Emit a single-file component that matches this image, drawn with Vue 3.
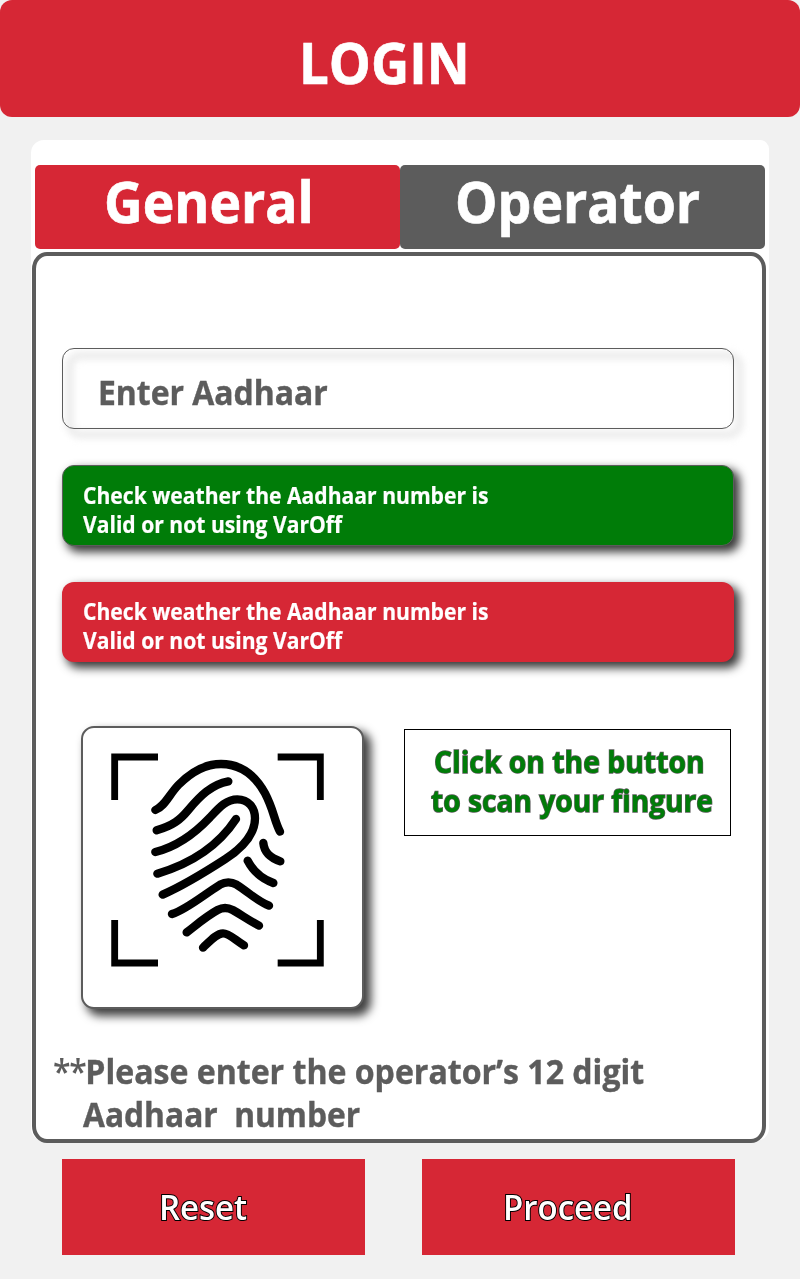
<script setup>
import { ref } from 'vue'

const tab = ref('general')
const aadhaar = ref('')

const notices = [
  { kind: 'valid', lines: ['Check weather the Aadhaar number is', 'Valid or not using VarOff'] },
  { kind: 'invalid', lines: ['Check weather the Aadhaar number is', 'Valid or not using VarOff'] },
]
</script>

<template>
  <div class="page">
    <header class="header"><h1 class="title">LOGIN</h1></header>

    <main class="card">
      <nav class="tabs">
        <button class="tab tab-general" :class="{ active: tab === 'general' }"><span>General</span></button>
        <button class="tab tab-operator" :class="{ active: tab === 'operator' }"><span>Operator</span></button>
      </nav>

      <section class="panel">
        <label class="field"><span>{{ aadhaar || 'Enter Aadhaar' }}</span></label>

        <div v-for="n in notices" :key="n.kind" class="notice" :class="n.kind">
          <span class="n1">{{ n.lines[0] }}</span>
          <span class="n2">{{ n.lines[1] }}</span>
        </div>

        <div class="scan">
          <button class="finger" aria-label="Scan">
            <svg viewBox="39 54 837 837" fill="none" stroke="#000">
              <g stroke-width="20.5">
                <path d="M134 270V141H264" />
                <path d="M623 141H751V270" />
                <path d="M134 630V759H264" />
                <path d="M623 759H751V630" />
              </g>
              <g stroke-width="25" stroke-linecap="round" stroke-linejoin="round">
                <path d="M256 300C285 288 295 257 325 225C365 184 405 162 453 162C510 162 555 195 585 250C612 302 612 330 630 365" />
                <path d="M260 361C310 346 330 330 355 300C390 258 425 223 475 214" />
                <path d="M256 426C320 410 370 375 420 322C450 290 470 268 502 268C535 268 555 293 555 325C555 370 520 412 465 448C400 490 340 527 278 554" />
                <path d="M262 491C350 465 440 415 498 327" />
                <path d="M580 399C583 430 603 444 631 454" />
                <path d="M533 452C550 485 580 508 610 519" />
                <path d="M306 612C350 598 400 555 450 524Q475 510 500 524C535 546 560 572 597 587" />
                <path d="M350 667C385 640 410 618 443 600Q465 588 488 600C515 615 535 630 567 647" />
                <path d="M399 713C420 693 440 670 459 670C478 670 495 690 522 706" />
              </g>
            </svg>
          </button>
          <p class="hint">
            <span class="h1">Click on the button</span>
            <span class="h2">to scan your fingure</span>
          </p>
        </div>

        <p class="note">
          <span class="p1"><b class="stars">**</b>Please enter the operator’s 12 digit</span>
          <span class="p2">Aadhaar&nbsp; number</span>
        </p>
      </section>
    </main>

    <footer class="actions">
      <button class="action reset"><span>Reset</span></button>
      <button class="action proceed"><span>Proceed</span></button>
    </footer>
  </div>
</template>

<style>
body {
  margin: 0;
  background: #f1f1f1;
}
</style>

<style scoped>
.page {
  box-sizing: border-box;
  width: 800px;
  height: 1279px;
  overflow: hidden;
  background: #f1f1f1;
  font-family: "Open Sans", "Noto Sans", sans-serif;
  font-weight: 700;
}
.page * {
  box-sizing: border-box;
}
button {
  border: 0;
  padding: 0;
  margin: 0;
  font: inherit;
  text-align: left;
  display: block;
}
span {
  display: block;
  width: max-content;
  white-space: pre;
  transform: scaleX(0.938);
  transform-origin: 0 50%;
}
.header {
  height: 117px;
  border-radius: 12px;
  background: #d62735;
  padding: 22px 0 0 299px;
}
.title {
  margin: 0;
  width: max-content;
  color: #fff;
  font-size: 57px;
  line-height: 80px;
  -webkit-text-stroke: 0.7px #fff;
  transform: scaleX(0.927);
  transform-origin: 0 50%;
}
.card {
  margin: 23px 31px 0;
  height: 1001px;
  border-radius: 13px 9px 13px 13px;
  background: #fff;
  padding: 25px 3px 0 1px;
}
.tabs {
  display: flex;
  padding-left: 3px;
}
.tab {
  width: 365px;
  height: 84px;
  border-radius: 5px;
  background: #5c5c5c;
  color: #fff;
  font-size: 57px;
  line-height: 80px;
  -webkit-text-stroke: 0.7px #fff;
}
.tab span {
  margin-top: -12px;
}
.tab.active {
  background: #d62735;
}
.tab-general { padding-left: 69px; }
.tab-operator { padding-left: 55px; }
.panel {
  position: relative;
  isolation: isolate;
  margin-top: 3px;
  height: 891px;
  border: 4px solid #5c5c5c;
  border-radius: 15px / 17px;
  background: #fff;
  padding: 92px 0 0 26px;
}
.field {
  position: relative;
  display: block;
  width: 672px;
  height: 81px;
  border: 1px solid #5c5c5c;
  border-radius: 12px;
  padding: 17px 0 0 35px;
  color: #5c5c5c;
  font-size: 34px;
  line-height: 52px;
  -webkit-text-stroke: 0.4px #5c5c5c;
}
.field::before {
  content: "";
  position: absolute;
  z-index: -1;
  inset: 2px -11px -11px 2px;
  border: 9px solid #eeeeee;
  border-radius: 16px;
  filter: blur(3px);
}
.notice {
  width: 672px;
  height: 81px;
  margin-top: 36px;
  border-radius: 12px;
  padding: 15px 0 0 21px;
  color: #fff;
  font-size: 22.5px;
  line-height: 29px;
  -webkit-text-stroke: 0.2px #fff;
  box-shadow: 5px 5px 10px 1px rgba(0, 0, 0, 0.78);
}
.valid {
  background: #007c08;
  border: 1px solid #5c5c5c;
  padding: 15px 0 0 20px;
}
.invalid {
  background: #d62735;
  height: 80px;
}
.scan {
  display: flex;
  align-items: flex-start;
  margin: 64px 0 0 19px;
}
.finger {
  width: 283px;
  height: 283px;
  border: 2px solid #5c5c5c;
  border-radius: 13px;
  background: #fff;
  box-shadow: 6px 6px 10px 1px rgba(0, 0, 0, 0.75);
}
.finger svg {
  display: block;
  width: 279px;
  height: 279px;
}
.hint {
  width: 327px;
  height: 107px;
  margin: 3px 0 0 40px;
  border: 1px solid #000;
  padding: 12px 0 0 26px;
  color: #007c08;
  font-size: 30px;
  line-height: 39px;
  paint-order: stroke fill;
  -webkit-text-stroke: 1.4px #5c5c5c;
}
.h1 {
  margin-left: 3px;
  transform: scaleX(0.944);
}
.note {
  margin: 41px 0 0 -9px;
  color: #5c5c5c;
  font-size: 34px;
  line-height: 43px;
  -webkit-text-stroke: 0.4px #5c5c5c;
}
.stars {
  letter-spacing: -1.5px;
  font-weight: 600;
  -webkit-text-stroke: 0;
}
.p1 {
  transform: scaleX(0.943);
}
.p2 {
  margin-left: 30px;
  transform: scaleX(0.933);
}
.actions {
  display: flex;
  gap: 57px;
  padding: 18px 0 0 62px;
}
.action {
  height: 96px;
  background: #d62735;
  color: #fff;
  font-size: 34px;
  line-height: 97px;
  font-weight: 600;
  paint-order: stroke fill;
  -webkit-text-stroke: 2px #000;
}
.action span {
  transform: scaleX(0.97);
}
.reset { width: 303px; padding-left: 97px; }
.proceed { width: 313px; padding-left: 81px; }
</style>
